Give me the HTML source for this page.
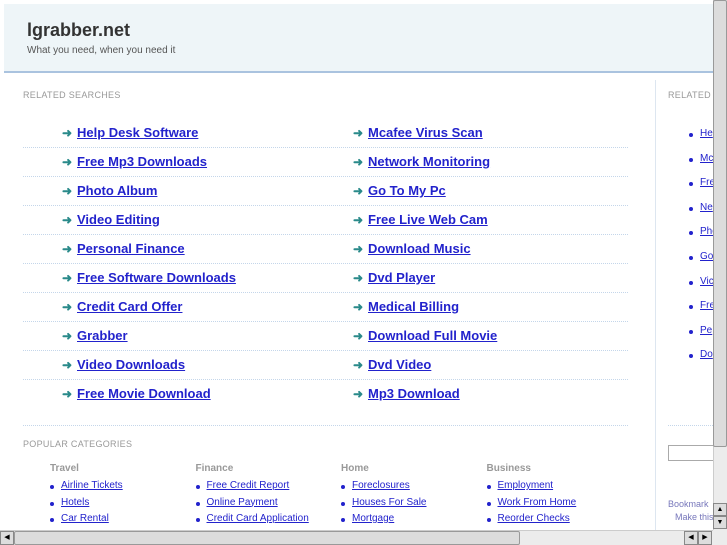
<!DOCTYPE html>
<html><head><meta charset="utf-8"><style>
*{margin:0;padding:0;box-sizing:border-box}
body{width:727px;height:545px;overflow:hidden;background:#fff;font-family:"Liberation Sans",sans-serif;position:relative}
.a{position:absolute;white-space:nowrap}
.hdr{left:4px;top:4px;width:709px;height:69px;background:#eef5f8;border-bottom:2px solid #aac3df}
.t{left:27px;top:20px;font-size:18px;font-weight:bold;color:#333}
.s{left:27px;top:45px;font-size:10px;color:#555}
.cap{font-size:9px;color:#999;letter-spacing:.3px}
.lk{font-size:13px;font-weight:bold;color:#2222cc;text-decoration:underline}
.ar{font-size:12px;font-weight:bold;color:#2a8a8a}
.dot{height:0;border-top:1px dotted #c4d6ea}
.ch{font-size:10px;font-weight:bold;color:#999}
.sl{font-size:10px;color:#2222cc;text-decoration:underline}
.b{width:4px;height:4px;background:#2222cc;border-radius:2px}
</style></head><body>
<div class="a hdr"></div>
<div class="a t">lgrabber.net</div>
<div class="a s">What you need, when you need it</div>
<div class="a" style="left:655px;top:80px;width:1px;height:450px;background:#dde6f0"></div>
<div class="a cap" style="left:23px;top:90px">RELATED SEARCHES</div>
<div class="a cap" style="left:668px;top:90px">RELATED</div>

<div id="rows"></div>
<script>
var L=["Help Desk Software","Free Mp3 Downloads","Photo Album","Video Editing","Personal Finance","Free Software Downloads","Credit Card Offer","Grabber","Video Downloads","Free Movie Download"];
var R=["Mcafee Virus Scan","Network Monitoring","Go To My Pc","Free Live Web Cam","Download Music","Dvd Player","Medical Billing","Download Full Movie","Dvd Video","Mp3 Download"];
var h="";
for(var i=0;i<10;i++){var y=125+i*29;
h+='<div class="a ar" style="left:62px;top:'+(y+1)+'px">&#10140;</div><div class="a lk" style="left:77px;top:'+y+'px">'+L[i]+'</div>';
h+='<div class="a ar" style="left:353px;top:'+(y+1)+'px">&#10140;</div><div class="a lk" style="left:368px;top:'+y+'px">'+R[i]+'</div>';
if(i<9)h+='<div class="a dot" style="left:23px;width:605px;top:'+(y+22)+'px"></div>';
}
h+='<div class="a dot" style="left:23px;width:605px;top:425px"></div><div class="a dot" style="left:668px;width:45px;top:425px"></div>';
var S=["He","Mc","Fre","Ne","Pho","Go","Vic","Fre","Pe","Do"];
for(var i=0;i<10;i++){var y=128+i*24.6;h+='<div class="a b" style="left:689px;top:'+(y+5)+'px"></div><div class="a sl" style="left:700px;top:'+y+'px">'+S[i]+'</div>';}
var C=[["Travel","Airline Tickets","Hotels","Car Rental"],["Finance","Free Credit Report","Online Payment","Credit Card Application"],["Home","Foreclosures","Houses For Sale","Mortgage"],["Business","Employment","Work From Home","Reorder Checks"]];
for(var c=0;c<4;c++){var x=50+c*145.5;h+='<div class="a ch" style="left:'+x+'px;top:463px">'+C[c][0]+'</div>';
for(var j=1;j<4;j++){var y=480+(j-1)*16.5;h+='<div class="a b" style="left:'+x+'px;top:'+(y+5)+'px"></div><div class="a sl" style="left:'+(x+11)+'px;top:'+y+'px">'+C[c][j]+'</div>';}}
document.getElementById("rows").innerHTML=h;
</script>
<div class="a cap" style="left:23px;top:439px">POPULAR CATEGORIES</div>
<div class="a" style="left:668px;top:445px;width:50px;height:16px;border:1px solid #aaa"></div>
<div class="a" style="left:668px;top:499px;font-size:9px;color:#7777bb">Bookmark</div>
<div class="a" style="left:675px;top:512px;font-size:9px;color:#7777bb">Make this</div>
<div class="a" style="left:713px;top:0;width:14px;height:530px;background:#ececec;border-left:1px solid #ccc"></div>
<div class="a" style="left:713px;top:0;width:14px;height:447px;background:#dcdcdc;border:1px solid #999;border-radius:2px"></div>
<div class="a" style="left:713px;top:503px;width:14px;height:13px;background:#ddd;border:1px solid #888;font-size:7px;text-align:center;line-height:11px">▲</div>
<div class="a" style="left:713px;top:516px;width:14px;height:13px;background:#ddd;border:1px solid #888;font-size:7px;text-align:center;line-height:11px">▼</div>
<div class="a" style="left:0;top:530px;width:713px;height:15px;background:#ececec;border-top:1px solid #ccc"></div>
<div class="a" style="left:0;top:531px;width:14px;height:14px;background:#ddd;border:1px solid #888;font-size:7px;text-align:center;line-height:12px">◀</div>
<div class="a" style="left:14px;top:531px;width:506px;height:14px;background:#dcdcdc;border:1px solid #999;border-radius:2px"></div>
<div class="a" style="left:684px;top:531px;width:14px;height:14px;background:#ddd;border:1px solid #888;font-size:7px;text-align:center;line-height:12px">◀</div>
<div class="a" style="left:698px;top:531px;width:14px;height:14px;background:#ddd;border:1px solid #888;font-size:7px;text-align:center;line-height:12px">▶</div>
<div class="a" style="left:713px;top:530px;width:14px;height:15px;background:#ececec"></div>
</body></html>
